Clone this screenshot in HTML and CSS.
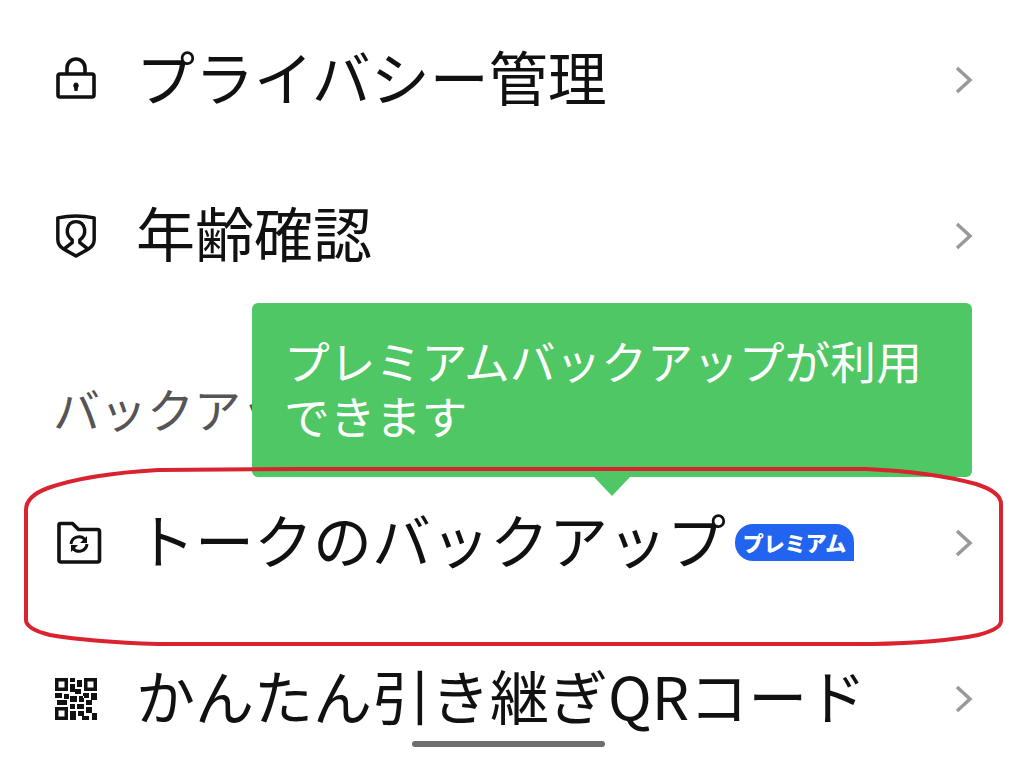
FILE: index.html
```html
<!DOCTYPE html>
<html lang="ja">
<head>
<meta charset="utf-8">
<title>設定</title>
<link rel="stylesheet" href="styles.css">
</head>
<body>
<main class="screen">
  <div class="row">
    <svg class="icon" viewBox="0 3 44 44"><path d="M13 19v-6a9 9 0 0 1 18 0v6"/><rect x="4" y="19" width="36" height="23" rx="2"/><path class="fill" d="M22 27.500a3 3 0 0 1 2 5l-.5 3.500h-3l-.5-3.500a3 3 0 0 1 2-5z"/></svg>
    <span class="label">プライバシー管理</span>
    <svg class="chev" viewBox="0 0 20 30"><path d="M3 3l13 12L3 27"/></svg>
  </div>
  <div class="row">
    <svg class="icon" viewBox="0 1 44 46"><path d="M3 5q19-4 38 0v23q0 6-6 9.500L22 45 9 37.500Q3 34 3 28z"/><path d="M9 38l9-7v-3q-6-4-5-11 1.500-8 9-8t9 8q1 7-5 11v3l9 7"/></svg>
    <span class="label">年齢確認</span>
    <svg class="chev" viewBox="0 0 20 30"><path d="M3 3l13 12L3 27"/></svg>
  </div>
  <div class="section">バックアップ</div>
  <div class="row">
    <svg class="icon" viewBox="-3 0 44 44"><path d="M2 4q0-1.500 1.500-1.500h12l6 6h19q2 0 2 2V39q0 2-2 2H4q-2 0-2-2z"/><path class="thin" d="M14 23a8 8 0 0 1 14-4.500M30 23a8 8 0 0 1-14 4.500"/><path class="fill" d="M30 15v7h-7zM14 31v-7h7z"/></svg>
    <span class="label">トークのバックアップ</span>
    <span class="badge">プレミアム</span>
    <svg class="chev" viewBox="0 0 20 30"><path d="M3 3l13 12L3 27"/></svg>
  </div>
  <div class="row">
    <svg class="icon qr" viewBox="0 0 44 44"><path class="fill" fill-rule="evenodd" d="M1 1h13v13H1zM4.500 4.500v6h6v-6zM30 1h13v13H30zM33.500 4.500v6h6v-6zM1 30h13v13H1zM4.500 33.500v6h6v-6zM16 1h5v4h-5zM23 3h5v7h-5zM16 7h5v8h-5zM21 12h6v5h-6zM1 16h7v5H1zM10 17h5v5h-5zM29 16h6v5h-6zM37 16h6v7h-6zM3 23h10v5H3zM16 19h7v6h-7zM25 19h5v6h-5zM32 23h6v5h-6zM16 27h5v5h-5zM23 27h7v5h-7zM16 34h6v9h-6zM24 34h6v5h-6zM32 30h6v6h-6zM38 36h5v7h-5zM28 39h7v4h-7z"/></svg>
    <span class="label">かんたん引き継ぎQRコード</span>
    <svg class="chev" viewBox="0 0 20 30"><path d="M3 3l13 12L3 27"/></svg>
  </div>

  <div class="tooltip">プレミアムバックアップが利用できます</div>
  <svg class="markup" viewBox="0 0 1024 766"><path d="M26 620V510q0-14 22-22 40-14 110-18 L300 469H866q66 3 110 15 25 8 25 20V621q0 8-23 14-40 8-106 9H158q-66-2-108-9-24-6-24-15z"/></svg>
  <div class="home"></div>
</main>
</body>
</html>
```

FILE: styles.css
```css
* { box-sizing: border-box; }
html, body { margin: 0; background: #fff; }
.screen {
  position: relative;
  width: 1024px;
  height: 766px;
  overflow: hidden;
  padding-top: 2px;
  font-family: "Noto Sans CJK JP", "Noto Sans", sans-serif;
  color: #111;
}
.row {
  display: flex;
  align-items: center;
  height: 156px;
  padding: 0 50px 0 54px;
}
.icon {
  flex: none;
  width: 44px;
  height: 44px;
  margin-right: 38px;
  overflow: visible;
  fill: none;
  stroke: #111;
  stroke-width: 3.600;
  stroke-linejoin: round;
}
.icon .thin { stroke-width: 3; }
.icon .fill { fill: #111; stroke: none; }
.label {
  font-size: 59px;
  line-height: 70px;
  margin-bottom: 8px;
  white-space: nowrap;
  font-weight: 400;
}
.badge {
  flex: none;
  width: 119px;
  height: 37px;
  margin: 0 0 2px 9px;
  background: #2263f0;
  color: #fff;
  font-size: 21px;
  font-weight: 900;
  line-height: 37px;
  text-align: center;
  white-space: nowrap;
  border-radius: 18px 18px 0 18px;
}
.chev {
  flex: none;
  width: 20px;
  height: 30px;
  margin-left: auto;
  fill: none;
  stroke: #999;
  stroke-width: 3.500;
}
.section {
  height: 151px;
  padding: 68px 0 0 53px;
  font-size: 47px;
  line-height: 52px;
  color: #555;
  white-space: nowrap;
}
.tooltip {
  position: absolute;
  left: 252px;
  top: 303px;
  width: 720px;
  height: 174px;
  padding: 30px 32px 0;
  background: #4fc765;
  border-radius: 6px;
  color: #fff;
  font-size: 45.800px;
  line-height: 55px;
}
.tooltip::after {
  content: "";
  position: absolute;
  left: 342px;
  top: 174px;
  border-left: 18px solid transparent;
  border-right: 18px solid transparent;
  border-top: 19px solid #4fc765;
}
.markup {
  position: absolute;
  left: 0;
  top: 0;
  width: 1024px;
  height: 766px;
  fill: none;
  stroke: #d9232e;
  stroke-width: 4;
}
.home {
  position: absolute;
  left: 412px;
  top: 741px;
  width: 193px;
  height: 6px;
  border-radius: 3px;
  background: #6e6e6e;
}
```
